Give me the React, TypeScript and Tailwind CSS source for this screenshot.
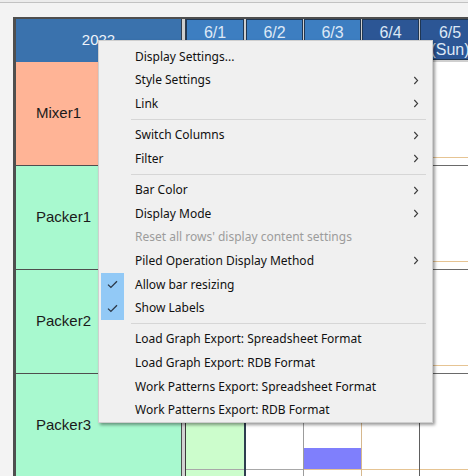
import React from "react";

type Item =
  | { sep: true }
  | { t: string; sub?: boolean; disabled?: boolean; checked?: boolean; sep?: false };

const items: Item[] = [
  { t: "Display Settings..." },
  { t: "Style Settings", sub: true },
  { t: "Link", sub: true },
  { sep: true },
  { t: "Switch Columns", sub: true },
  { t: "Filter", sub: true },
  { sep: true },
  { t: "Bar Color", sub: true },
  { t: "Display Mode", sub: true },
  { t: "Reset all rows' display content settings", disabled: true },
  { t: "Piled Operation Display Method", sub: true },
  { t: "Allow bar resizing", checked: true },
  { t: "Show Labels", checked: true },
  { sep: true },
  { t: "Load Graph Export: Spreadsheet Format" },
  { t: "Load Graph Export: RDB Format" },
  { t: "Work Patterns Export: Spreadsheet Format" },
  { t: "Work Patterns Export: RDB Format" },
];

const Chevron = () => (
  <svg width="6" height="9" viewBox="0 0 6 9">
    <path d="M1.3 1 L4.6 4.5 L1.3 8" fill="none" stroke="#3c3c3c" strokeWidth="1.1" />
  </svg>
);

const Check = () => (
  <svg width="11" height="9" viewBox="0 0 11 9">
    <path d="M1 4.6 L3.9 7.4 L10 1.2" fill="none" stroke="#2a3646" strokeWidth="1.3" />
  </svg>
);

const rows = [
  { name: "Mixer1", bg: "bg-[#ffb496]" },
  { name: "Packer1", bg: "bg-[#a8f9cf]" },
  { name: "Packer2", bg: "bg-[#a8f9cf]" },
  { name: "Packer3", bg: "bg-[#a8f9cf]" },
];

function GridRow({ idx }: { idx: number }) {
  const last = idx === 3;
  return (
    <div className="flex h-[104px]">
      {/* col 6/1 */}
      <div className={`w-[60px] flex flex-col border-r-2 border-[#2e3e50] ${last ? "bg-[#ccfdcc]" : "bg-white"}`}>
        <div className="h-[95px]" />
        <div className="h-[1px] bg-[#a8a8a8]" />
        <div className="h-[7px]" />
        <div className="h-[1px] bg-[#6a6a6a]" />
      </div>
      {/* col 6/2 */}
      <div className="w-[58px] flex flex-col border-r border-[#9c9c9c] bg-white">
        <div className="h-[95px]" />
        <div className="h-[1px] bg-[#a8a8a8]" />
        <div className="h-[7px]" />
        <div className="h-[1px] bg-[#6a6a6a]" />
      </div>
      {/* col 6/3 */}
      <div className="w-[58px] flex flex-col border-r border-[#d6b88e] bg-white">
        <div className="h-[95px] flex flex-col justify-end">
          {last && <div className="h-[21px] bg-[#7f7ffc]" />}
        </div>
        <div className="h-[1px] bg-[#e6c493]" />
        <div className="h-[7px]" />
        <div className="h-[1px] bg-[#6a6a6a]" />
      </div>
      {/* col 6/4 */}
      <div className="w-[58px] flex flex-col border-r border-[#5e5e5e] bg-white">
        <div className="h-[95px]" />
        <div className="h-[1px] bg-[#e6c493]" />
        <div className="h-[7px]" />
        <div className="h-[1px] bg-[#6a6a6a]" />
      </div>
      {/* col 6/5 */}
      <div className="w-[60px] flex flex-col bg-white">
        <div className="h-[95px]" />
        <div className="h-[1px] bg-[#e6c493]" />
        <div className="h-[7px]" />
        <div className="h-[1px] bg-[#6a6a6a]" />
      </div>
    </div>
  );
}

export default function App() {
  return (
    <div className="relative w-[468px] h-[476px] overflow-hidden bg-[#efefef]">
      <div className="h-[2px] bg-[#ececec]" />
      <div className="border-t border-[#c2c2c2] h-[480px] bg-[#f3f3f3] pl-[13px] pt-[14px]">
        <div className="border-l-[3px] border-t-2 border-[#4f4f4f] flex flex-col w-[480px]">
          {/* header */}
          <div className="flex h-[43px] bg-[#cfcfcf]">
            <div className="w-[166px] bg-[#3a72ad] border-r border-[#2f3d4f] flex items-center justify-center text-[15px] text-[#eef3fa] font-['Liberation_Sans',Arial,sans-serif]">
              2022
            </div>
            <div className="w-[3px]" />
            <div className="flex border-l border-[#2f3d4f] h-[41px]">
              {[
                { d: "6/1", bg: "bg-[#3d7ec1]" },
                { d: "6/2", bg: "bg-[#3d7ec1]" },
                { d: "6/3", bg: "bg-[#3d7ec1]" },
                { d: "6/4", bg: "bg-[#2c5695]" },
                { d: "6/5", bg: "bg-[#2c5695]", sub: "(Sun)" },
              ].map((c, i) => (
                <div
                  key={c.d}
                  className={`${i === 0 ? "w-[60px] pr-[2px]" : i === 4 ? "w-[60px]" : "w-[58px] pr-[1px]"} h-full`}
                >
                  <div
                    className={`h-full ${c.bg} border border-[#1f3653] flex flex-col items-center pt-[4px] leading-[17px] text-[16px] text-[#dde8f6] font-['Liberation_Sans',Arial,sans-serif]`}
                  >
                    <span>{c.d}</span>
                    {c.sub && <span>{c.sub}</span>}
                  </div>
                </div>
              ))}
            </div>
          </div>
          {/* body rows */}
          {rows.map((r, i) => (
            <div key={r.name} className="flex h-[104px]">
              <div
                className={`w-[166px] ${r.bg} border-r border-b border-[#4e4e4e] flex items-center pl-[20px] text-[15px] text-[#1b1b1b] font-['Liberation_Sans',Arial,sans-serif]`}
              >
                {r.name}
              </div>
              <div className="w-[3px] bg-[#d2d2d2]" />
              <div className="border-l border-[#3a3a3a]">
                <GridRow idx={i} />
              </div>
            </div>
          ))}
        </div>
      </div>

      {/* context menu */}
      <div className="absolute left-[98px] top-[40px] w-[335px] h-[383px] bg-[#f0f0f0] border border-[#cfcfcf] shadow-[2px_2px_3px_rgba(0,0,0,0.4)] pt-[4px] pb-[1px] px-[2px] font-['Noto_Sans','Open_Sans',sans-serif] text-[12px]">
        {items.map((it, i) =>
          "t" in it ? (
            <div key={i} className="flex items-center h-[23.6px]">
              <div className={`w-[23px] h-full flex items-center justify-center ${it.checked ? "bg-[#92c9f6]" : ""}`}>
                {it.checked && <Check />}
              </div>
              <div className={`flex-1 pl-[11px] whitespace-nowrap ${it.disabled ? "text-[#9c9c9c]" : "text-[#111]"}`}>
                {it.t}
              </div>
              <div className="w-[24px] flex items-center justify-start pl-[7px]">
                {it.sub && <Chevron />}
              </div>
            </div>
          ) : (
            <div key={i} className="h-[7.7px] flex items-center pl-[30px] pr-[4px]">
              <div className="h-[1px] w-full bg-[#d6d6d6]" />
            </div>
          )
        )}
      </div>
    </div>
  );
}
